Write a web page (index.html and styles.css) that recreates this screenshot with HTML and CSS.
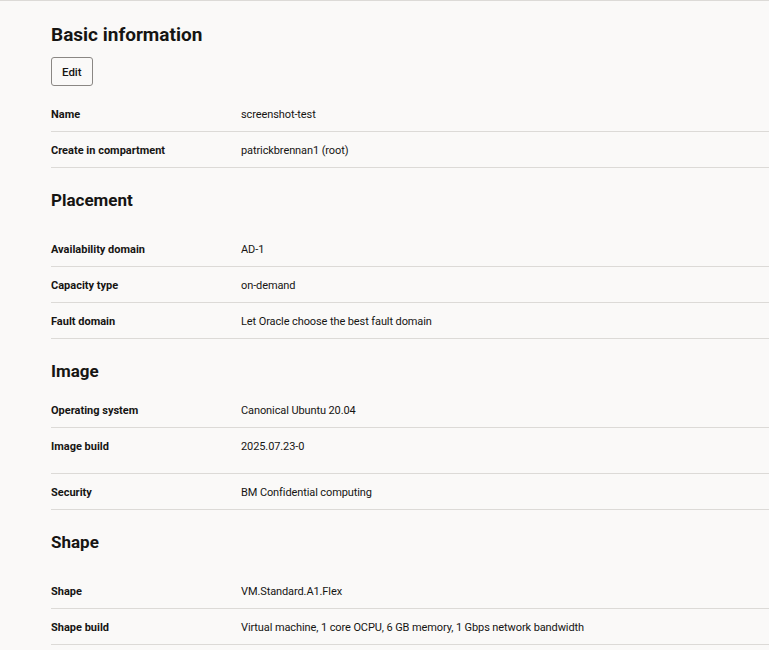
FILE: index.html
```html
<!DOCTYPE html>
<html lang="en">
<head>
<meta charset="utf-8">
<title>Review</title>
<link rel="stylesheet" href="styles.css">
</head>
<body>
<main class="page">
  <section class="section section--first">
    <h1 class="title">Basic information</h1>
    <button class="edit-btn" type="button">Edit</button>
    <dl class="rows">
      <div class="row"><dt class="label">Name</dt><dd class="value">screenshot-test</dd></div>
      <div class="row"><dt class="label">Create in compartment</dt><dd class="value">patrickbrennan1 (root)</dd></div>
    </dl>
  </section>

  <section class="section">
    <h2 class="heading heading--spaced">Placement</h2>
    <dl class="rows">
      <div class="row"><dt class="label">Availability domain</dt><dd class="value">AD-1</dd></div>
      <div class="row"><dt class="label">Capacity type</dt><dd class="value">on-demand</dd></div>
      <div class="row"><dt class="label">Fault domain</dt><dd class="value">Let Oracle choose the best fault domain</dd></div>
    </dl>
  </section>

  <section class="section">
    <h2 class="heading">Image</h2>
    <dl class="rows">
      <div class="row"><dt class="label">Operating system</dt><dd class="value">Canonical Ubuntu 20.04</dd></div>
      <div class="row row--tall"><dt class="label">Image build</dt><dd class="value">2025.07.23-0</dd></div>
      <div class="row"><dt class="label">Security</dt><dd class="value">BM Confidential computing</dd></div>
    </dl>
  </section>

  <section class="section">
    <h2 class="heading heading--spaced">Shape</h2>
    <dl class="rows">
      <div class="row"><dt class="label">Shape</dt><dd class="value">VM.Standard.A1.Flex</dd></div>
      <div class="row"><dt class="label">Shape build</dt><dd class="value">Virtual machine, 1 core OCPU, 6 GB memory, 1 Gbps network bandwidth</dd></div>
    </dl>
  </section>
</main>
</body>
</html>
```
FILE: styles.css
```css
html, body {
  margin: 0;
  padding: 0;
  background: #faf9f8;
}

body {
  font-family: Roboto, "Liberation Sans", sans-serif;
  color: #161513;
  border-top: 1px solid #dcdad7;
}

.page {
  padding: 0 0 40px 51px;
}

.section {
  margin-top: 20px;
}

.section--first {
  margin-top: 22px;
}

.title {
  margin: 0 0 10px;
  font-size: 19px;
  line-height: 24px;
  font-weight: 700;
}

.heading {
  margin: 0 0 9px;
  font-size: 17px;
  line-height: 24px;
  font-weight: 700;
}

.heading--spaced {
  margin-bottom: 19px;
}

.edit-btn {
  display: block;
  box-sizing: border-box;
  height: 29px;
  padding: 0 10px;
  margin: 0 0 10px;
  border: 1px solid #8a8784;
  border-radius: 3px;
  background: transparent;
  font-family: inherit;
  font-size: 11.5px;
  font-weight: 500;
  color: #161513;
  cursor: pointer;
}

.rows {
  margin: 0;
}

.row {
  display: grid;
  grid-template-columns: 190px 1fr;
  padding: 11px 0 8px;
  border-bottom: 1px solid #dcdad7;
  font-size: 11px;
  line-height: 16px;
}

.row--tall {
  padding-bottom: 18px;
}

.label {
  font-weight: 700;
}

.value {
  margin: 0;
  letter-spacing: -0.1px;
}
```
